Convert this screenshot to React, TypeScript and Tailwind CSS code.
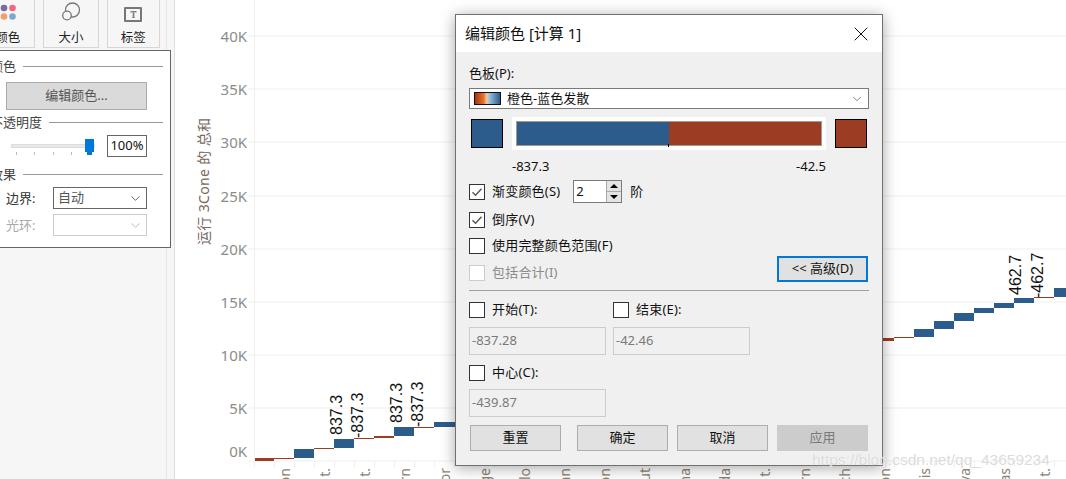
import { ChevronDown, X } from "lucide-react";

const font = { fontFamily: '"Noto Sans","Noto Sans CJK SC",sans-serif' };

const yTicks = [
  { label: "40K", grid: 36, text: 36 },
  { label: "35K", grid: 89, text: 89 },
  { label: "30K", grid: 142, text: 142 },
  { label: "25K", grid: 196, text: 196 },
  { label: "20K", grid: 249, text: 249 },
  { label: "15K", grid: 302, text: 302 },
  { label: "10K", grid: 355, text: 355 },
  { label: "5K", grid: 408, text: 408 },
  { label: "0K", grid: 461, text: 451 },
];

const bars = [
  [255, 458, 19, 3, "r"],
  [274, 458, 20, 1, "r"],
  [294, 449, 20, 9, "b"],
  [314, 448, 20, 1, "r"],
  [334, 439, 20, 9, "b"],
  [354, 438, 20, 1, "r"],
  [374, 436, 20, 2, "r"],
  [394, 427, 20, 9, "b"],
  [414, 427, 20, 1, "r"],
  [434, 422, 21, 5, "b"],
  [882, 338, 12, 3, "r"],
  [894, 337, 20, 1, "r"],
  [914, 329, 20, 8, "b"],
  [934, 321, 20, 8, "b"],
  [954, 313, 20, 8, "b"],
  [974, 308, 20, 5, "b"],
  [994, 303, 20, 5, "b"],
  [1014, 298, 20, 5, "b"],
  [1034, 297, 20, 1, "r"],
  [1054, 288, 12, 9, "b"],
] as const;

const dataLabels = [
  ["837.3", 342, 435],
  ["-837.3", 363, 438],
  ["837.3", 402, 423],
  ["-837.3", 423, 427],
  ["462.7", 1021, 295],
  ["-462.7", 1043, 298],
] as const;

// category labels sit every 40px, the screenshot cuts them off at the bottom
const xLabels = ["on", "t.", "t.", "rn", "or", "ge", "lo", "an", "on", "ut", "na", "da", "t.", "rn", "ch", "on", "is", "va", "as", "t."];

function Chart() {
  return (
    <svg className="block h-[479px] flex-1" viewBox="175 0 891 479" style={font}>
      {yTicks.map((t) => (
        <g key={t.label}>
          <line x1={248} x2={1066} y1={t.grid} y2={t.grid} stroke="#efefef" />
          <text x={247} y={t.text + 5.5} textAnchor="end" fontSize={15} fill="#8c8c8c">
            {t.label}
          </text>
        </g>
      ))}
      <line x1={254.5} x2={254.5} y1={0} y2={461} stroke="#f0f0f0" />
      {Array.from({ length: 41 }, (_, i) => (
        <line key={i} x1={254.5 + i * 20} x2={254.5 + i * 20} y1={461} y2={467} stroke="#efefef" />
      ))}
      <text
        transform="translate(209 245) rotate(-90)"
        fontSize={14}
        letterSpacing={0.35}
        fill="#75695f"
      >
        运行 3Cone 的 总和
      </text>
      {bars.map(([x, y, w, h, c]) => (
        <rect key={`${x}-${y}`} x={x} y={y} width={w} height={h} fill={c === "b" ? "#2c5c8c" : "#9c3c22"} />
      ))}
      {dataLabels.map(([t, x, y]) => (
        <text key={`${t}${x}`} transform={`translate(${x} ${y}) rotate(-90)`} fontSize={16} fill="#111" style={{ fontFamily: '"Liberation Sans",sans-serif' }}>
          {t}
        </text>
      ))}
      {xLabels.map((t, i) => (
        <text key={i} transform={`translate(${290 + i * 40} 468) rotate(-90)`} textAnchor="end" fontSize={14} fill="#8b7f76">
          {t}
        </text>
      ))}
    </svg>
  );
}

function MarkButton({ label, icon, className }: { label: string; icon: React.ReactNode; className: string }) {
  return (
    <div className={`flex h-[48px] flex-col items-center justify-between border border-t-0 border-[#d6d6d6] bg-[#f6f6f6] ${className}`}>
      <div className="flex h-[22px] items-end">{icon}</div>
      <span className="text-[12.5px] leading-[18px] text-[#222]">{label}</span>
    </div>
  );
}

function GroupHead({ label, className }: { label: string; className: string }) {
  return (
    <div className={`ml-[-4px] flex items-center gap-[7px] text-[13px] leading-[18px] text-[#444] ${className}`}>
      <span className="whitespace-nowrap">{label}</span>
      <div className="h-px flex-1 bg-[#9a9a9a]" />
    </div>
  );
}

function Popup() {
  return (
    <div className="absolute left-[-18px] top-[50px] flex h-[198px] w-[189px] flex-col border border-[#666] bg-white pl-[11px] pr-[7px] text-[#555]">
      <GroupHead label="颜色" className="mt-[6px]" />
      <div className="ml-[12px] mr-[16px] mt-[7px] flex h-[28px] items-center justify-center border border-[#aaa] bg-[#dadada] text-[13px]">
        编辑颜色...
      </div>
      <GroupHead label="不透明度" className="mt-[3px]" />
      <div className="mt-[4px] flex items-center">
        <div className="relative ml-[17px] h-[22px] w-[84px]">
          <div className="absolute left-0 right-0 top-[9px] h-[4px] border border-[#dcdcdc] bg-[#e8e8e8]" />
          <div className="absolute left-[74px] top-[4px] h-[13px] w-[9px] bg-[#0078d7]" />
          <div className="absolute left-[76px] top-[16px] h-[4px] w-[5px] bg-[#0078d7]" />
          <div className="absolute left-[5px] top-[17px] h-[3px] w-px bg-[#bbb]" />
          <div className="absolute left-[23px] top-[17px] h-[3px] w-px bg-[#bbb]" />
          <div className="absolute left-[42px] top-[17px] h-[3px] w-px bg-[#bbb]" />
          <div className="absolute left-[60px] top-[17px] h-[3px] w-px bg-[#bbb]" />
        </div>
        <div className="ml-[12px] flex h-[22px] w-[40px] items-center justify-center border border-[#666] text-[13px] text-[#111]">
          100%
        </div>
      </div>
      <GroupHead label="效果" className="mt-[8px]" />
      <div className="mt-[4px] flex items-center pl-[12px]">
        <span className="w-[47px] text-[13px] leading-[22px] text-[#333]">边界:</span>
        <div className="flex h-[22px] w-[94px] items-center justify-between border border-[#666] pl-[4px] pr-[3px] text-[13px]">
          自动
          <ChevronDown size={15} strokeWidth={1.2} className="text-[#333]" />
        </div>
      </div>
      <div className="mt-[5px] flex items-center pl-[12px]">
        <span className="w-[47px] text-[13px] leading-[22px] text-[#aaa]">光环:</span>
        <div className="flex h-[22px] w-[94px] items-center justify-end border border-[#ccc] pr-[3px]">
          <ChevronDown size={15} strokeWidth={1.2} className="text-[#aaa]" />
        </div>
      </div>
    </div>
  );
}

function Sidebar() {
  return (
    <div className="relative h-[479px] w-[175px] shrink-0 border-r border-[#dedede] bg-[#f6f6f6]">
      <div className="flex w-[160px] items-start gap-[8px] pl-0">
        <MarkButton
          label="颜色"
          className="ml-[-20px] w-[56px]"
          icon={
            <svg width="18" height="18" viewBox="0 0 18 18">
              <circle cx="5" cy="4" r="3.3" fill="#7b6a9c" />
              <circle cx="13.5" cy="4" r="3.3" fill="#f0667f" />
              <circle cx="5" cy="12.5" r="3.3" fill="#f0a070" />
              <circle cx="13.5" cy="12.5" r="3.3" fill="#7fa8d0" />
            </svg>
          }
        />
        <MarkButton
          label="大小"
          className="w-[56px]"
          icon={
            <svg width="20" height="20" viewBox="0 0 20 20" fill="none" stroke="#777" strokeWidth="1.3">
              <circle cx="11.5" cy="8" r="7" />
              <circle cx="6" cy="13.5" r="4.3" fill="#f6f6f6" />
            </svg>
          }
        />
        <MarkButton
          label="标签"
          className="w-[54px]"
          icon={
            <div className="flex h-[15px] w-[18px] items-center justify-center rounded-[1px] border-2 border-[#777] font-serif text-[10px] font-bold leading-none text-[#777]">
              T
            </div>
          }
        />
      </div>
      <div className="absolute left-[166px] top-0 h-full w-px bg-[#e6e6e6]" />
      <Popup />
    </div>
  );
}

function Check({ checked, disabled }: { checked?: boolean; disabled?: boolean }) {
  return (
    <div className={`flex h-[16px] w-[16px] shrink-0 items-center justify-center border ${disabled ? "border-[#ccc]" : "border-[#333]"} bg-white`}>
      {checked && (
        <svg width="12" height="12" viewBox="0 0 12 12" fill="none" stroke="#555" strokeWidth="1.4">
          <path d="M1.5 6.2 4.6 9.2 10.5 2.8" />
        </svg>
      )}
    </div>
  );
}

function CheckLabel({ label, checked, disabled, className }: { label: string; checked?: boolean; disabled?: boolean; className?: string }) {
  return (
    <div className={`flex items-center gap-[7px] text-[13px] tracking-[0.2px] ${disabled ? "text-[#8a8a8a]" : "text-[#111]"} ${className ?? ""}`}>
      <Check checked={checked} disabled={disabled} />
      <span className="whitespace-nowrap">{label}</span>
    </div>
  );
}

function ReadonlyInput({ value }: { value: string }) {
  return (
    <div className="flex h-[28px] w-[137px] items-center border border-[#ccc] bg-[#f0f0f0] pl-[2px] text-[13px] text-[#7a7a7a]">
      {value}
    </div>
  );
}

function DialogButton({ label, disabled }: { label: string; disabled?: boolean }) {
  return (
    <div
      className={`flex h-[26px] w-[91px] items-center justify-center border text-[13px] ${
        disabled ? "border-[#ccc] bg-[#cccccc] text-[#7a7a7a]" : "border-[#adadad] bg-[#e1e1e1] text-[#111]"
      }`}
    >
      {label}
    </div>
  );
}

function Dialog() {
  return (
    <div className="absolute left-[455px] top-[14px] flex h-[452px] w-[428px] flex-col border border-[#707070] bg-[#f0f0f0] shadow-[0_2px_14px_rgba(0,0,0,0.35)]">
      <div className="flex h-[37px] shrink-0 items-center justify-between bg-white pl-[9px] pr-[9px] text-[15px] text-[#111]">
        <span>编辑颜色 [计算 1]</span>
        <X size={24} strokeWidth={1} className="text-[#111]" />
      </div>
      <div className="flex flex-1 flex-col pl-[13px] pr-[13px]">
        <div className="mt-[12px] h-[18px] text-[13px] leading-[18px] text-[#111]">色板(P):</div>
        <div className="mt-[6px] flex h-[21px] items-center border border-[#7a7a7a] bg-white pl-[4px] pr-[4px] text-[13px] text-[#111]">
          <div className="h-[13px] w-[27px] border border-[#111] bg-[linear-gradient(90deg,#a5350f,#e8742a_35%,#f5c89a_47%,#9cc4de_56%,#2c5c8c)]" />
          <span className="ml-[6px] flex-1">橙色-蓝色发散</span>
          <ChevronDown size={14} strokeWidth={1.2} className="text-[#555]" />
        </div>
        <div className="mt-[8px] flex h-[33px] items-center pl-[2px]">
          <div className="h-[29px] w-[32px] border border-black bg-[#2c5c8c]" />
          <div className="ml-[9px] flex h-[33px] w-[314px] bg-white p-[4px]">
            <div className="flex flex-1 border border-[#a09c94]">
              <div className="relative w-1/2 bg-[#2c5c8c]">
                <div className="absolute bottom-[-2px] right-0 h-[3px] w-px bg-black" />
              </div>
              <div className="w-1/2 bg-[#9c3c22]" />
            </div>
          </div>
          <div className="ml-[9px] h-[29px] w-[32px] border border-black bg-[#9c3c22]" />
        </div>
        <div className="mt-[7px] flex w-[357px] justify-between pl-[43px] text-[13px] leading-[18px] text-[#111]">
          <span>-837.3</span>
          <span>-42.5</span>
        </div>
        <div className="mt-[5px] flex h-[23px] items-center">
          <CheckLabel label="渐变颜色(S)" checked />
          <div className="ml-[13px] flex h-[23px] w-[49px] items-center border border-[#7a7a7a] bg-white pl-[2px] text-[13px] text-[#111]">
            <span className="flex-1">2</span>
            <div className="flex h-[21px] w-[15px] flex-col border-l border-[#aaa] bg-[#e4e4e4] text-[#111]">
              <div className="flex flex-1 items-center justify-center border-b border-[#aaa]">
                <div className="h-0 w-0 border-x-[4px] border-b-[4px] border-x-transparent border-b-black" />
              </div>
              <div className="flex flex-1 items-center justify-center">
                <div className="h-0 w-0 border-x-[4px] border-t-[4px] border-x-transparent border-t-black" />
              </div>
            </div>
          </div>
          <span className="ml-[8px] text-[13px] text-[#111]">阶</span>
        </div>
        <CheckLabel label="倒序(V)" checked className="mt-[5px] h-[23px]" />
        <CheckLabel label="使用完整颜色范围(F)" className="mt-[3px] h-[23px]" />
        <div className="mt-[-3px] flex items-start justify-between">
          <CheckLabel label="包括合计(I)" disabled className="mt-[7px] h-[23px]" />
          <div className="mr-[1px] mt-[2px] flex h-[26px] w-[91px] items-center justify-center border-2 border-[#0078d7] bg-[#e1e1e1] text-[13px] text-[#111]">
            {"<< 高级(D)"}
          </div>
        </div>
        <div className="mt-[6px] h-px bg-[#a0a0a0]" />
        <div className="mt-[10px] flex h-[18px] items-center">
          <CheckLabel label="开始(T):" className="w-[144px]" />
          <CheckLabel label="结束(E):" />
        </div>
        <div className="mt-[8px] flex gap-[7px]">
          <ReadonlyInput value="-837.28" />
          <ReadonlyInput value="-42.46" />
        </div>
        <CheckLabel label="中心(C):" className="mt-[9px] h-[18px]" />
        <div className="mt-[7px]">
          <ReadonlyInput value="-439.87" />
        </div>
        <div className="mt-[8px] flex pl-[1px]">
          <DialogButton label="重置" />
          <div className="ml-[16px]">
            <DialogButton label="确定" />
          </div>
          <div className="ml-[9px]">
            <DialogButton label="取消" />
          </div>
          <div className="ml-[9px]">
            <DialogButton label="应用" disabled />
          </div>
        </div>
      </div>
    </div>
  );
}

export default function App() {
  return (
    <div className="relative flex h-[479px] w-[1066px] overflow-hidden bg-white" style={font}>
      <Sidebar />
      <Chart />
      <Dialog />
      <div className="absolute left-[812px] top-[450px] font-['Liberation_Sans',sans-serif] text-[15.5px] leading-[20px] text-[#d2d2d2]/80 [text-shadow:0_0_1px_#ffffff]">
        https://blog.csdn.net/qq_43659234
      </div>
    </div>
  );
}
